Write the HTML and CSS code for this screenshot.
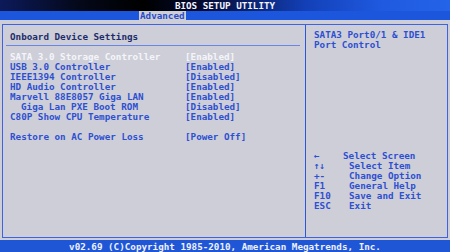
FILE: index.html
```html
<!DOCTYPE html>
<html lang="en">
<head>
  <meta charset="UTF-8" />
  <meta name="viewport" content="width=device-width, initial-scale=1.0" />
  <title>BIOS Setup Utility</title>
  <link rel="stylesheet" href="styles.css">
</head>
<body>
  <div class="screen">
    <!-- Barra de titulo -->
    <header class="titlebar">BIOS SETUP UTILITY</header>

    <nav class="tabs">
      <span class="tab activo">Advanced</span>
    </nav>

    <main class="cuerpo">
      <div class="marco">
        <section class="panel-izq">
          <h1 class="encabezado">Onboard Device Settings</h1>

          <ul class="ajustes">
            <li class="fila seleccionada"><span class="etiqueta">SATA 3.0 Storage Controller</span><span class="valor">[Enabled]</span></li>
            <li class="fila"><span class="etiqueta">USB 3.0 Controller</span><span class="valor">[Enabled]</span></li>
            <li class="fila"><span class="etiqueta">IEEE1394 Controller</span><span class="valor">[Disabled]</span></li>
            <li class="fila"><span class="etiqueta">HD Audio Controller</span><span class="valor">[Enabled]</span></li>
            <li class="fila"><span class="etiqueta">Marvell 88E8057 Giga LAN</span><span class="valor">[Enabled]</span></li>
            <li class="fila"><span class="etiqueta sub">Giga Lan PXE Boot ROM</span><span class="valor">[Disabled]</span></li>
            <li class="fila"><span class="etiqueta">C80P Show CPU Temperature</span><span class="valor">[Enabled]</span></li>
            <li class="fila vacia"></li>
            <li class="fila"><span class="etiqueta">Restore on AC Power Loss</span><span class="valor">[Power Off]</span></li>
          </ul>
        </section>

        <aside class="panel-der">
          <p class="ayuda">SATA3 Port0/1 &amp; IDE1<br>Port Control</p>

          <ul class="teclas">
            <li class="tecla corta"><span class="clave">&larr;</span><span>Select Screen</span></li>
            <li class="tecla"><span class="clave">&uarr;&darr;</span><span>Select Item</span></li>
            <li class="tecla"><span class="clave">+-</span><span>Change Option</span></li>
            <li class="tecla"><span class="clave">F1</span><span>General Help</span></li>
            <li class="tecla"><span class="clave">F10</span><span>Save and Exit</span></li>
            <li class="tecla"><span class="clave">ESC</span><span>Exit</span></li>
          </ul>
        </aside>
      </div>
    </main>

    <footer class="estado">v02.69 (C)Copyright 1985-2010, American Megatrends, Inc.</footer>
  </div>
</body>
</html>
```

FILE: styles.css
```css
body {
  margin: 0;
  background: #1f56d6;
  font-family: 'DejaVu Sans Mono', 'Liberation Mono', monospace;
  font-size: 9.25px;
  font-weight: bold;
  line-height: 10px;
}

.screen {
  width: 450px;
  height: 252px;
  display: flex;
  flex-direction: column;
  overflow: hidden;
}

.titlebar {
  height: 11px;
  line-height: 11px;
  text-align: center;
  color: #f2f4ff;
  background: linear-gradient(90deg, #0c1a5a 0%, #040818 18%, #000 32%, #030a30 45%, #1340b8 68%, #1f5ae0 85%, #2464e8 100%);
}

.tabs {
  height: 9px;
  background: #1b56dc;
  padding-left: 139px;
}

.tab {
  display: inline-block;
  height: 9px;
  line-height: 9px;
  padding: 0 1px;
  color: #2a4cc8;
  background: #cdced8;
}

.cuerpo {
  flex: 1;
  background: #cdced7;
  padding: 4px 2px 2px 2px;
}

.marco {
  height: 100%;
  box-sizing: border-box;
  border: 1px solid #3f62de;
  display: flex;
}

.panel-izq {
  width: 302px;
  border-right: 1px solid #2f55dc;
}

.encabezado {
  margin: 0;
  padding: 7px 0 0 7px;
  font-size: 9.25px;
  line-height: 10px;
  color: #1e2c6c;
}

.panel-izq .encabezado::after {
  content: "";
  display: block;
  height: 1px;
  margin: 3px 5px 6px -4px;
  background: #6a86e4;
}

.ajustes {
  list-style: none;
  margin: 0;
  padding: 0;
}

.fila {
  display: flex;
  height: 10px;
  color: #2d50d2;
}

.etiqueta {
  width: 175px;
  padding-left: 7px;
  white-space: pre;
}

.etiqueta.sub {
  width: 164px;
  padding-left: 18px;
}

.seleccionada {
  color: #f4f5fb;
}

.panel-der {
  flex: 1;
  padding: 5px 0 0 8px;
  color: #2d50d2;
  display: flex;
  flex-direction: column;
}

.ayuda {
  margin: 0;
}

.teclas {
  list-style: none;
  margin: 101px 0 0 0;
  padding: 0;
}

.tecla {
  display: flex;
  height: 10px;
}

.clave {
  width: 35px;
}

.tecla.corta .clave {
  width: 29px;
}

.estado {
  height: 12px;
  line-height: 13px;
  text-align: center;
  color: #eef1ff;
  background: #1f56d6;
}
```
